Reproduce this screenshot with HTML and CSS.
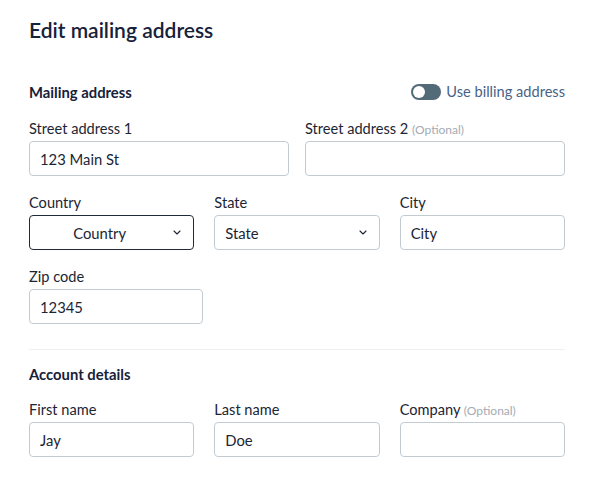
FILE: index.html
```html
<!DOCTYPE html>
<html lang="en">
<head>
<meta charset="utf-8">
<title>Edit mailing address</title>
<link rel="stylesheet" href="styles.css">
</head>
<body>
<main class="page">
  <h1 class="title">Edit mailing address</h1>

  <section class="section">
    <div class="section-head">
      <h2 class="section-title">Mailing address</h2>
      <label class="toggle">
        <span class="switch"><span class="knob"></span></span>
        <span class="toggle-text">Use billing address</span>
      </label>
    </div>

    <div class="row two">
      <div class="field">
        <label class="label">Street address 1</label>
        <div class="input">123 Main St</div>
      </div>
      <div class="field">
        <label class="label">Street address 2 <span class="opt">(Optional)</span></label>
        <div class="input"></div>
      </div>
    </div>

    <div class="row three">
      <div class="field">
        <label class="label">Country</label>
        <div class="input select focused">
          <span class="select-value center">Country</span>
          <svg class="chev" width="8" height="5" viewBox="0 0 8 5"><path d="M1 1l3 3 3-3" fill="none" stroke="#1b2535" stroke-width="1.1" stroke-linecap="round" stroke-linejoin="round"/></svg>
        </div>
      </div>
      <div class="field">
        <label class="label">State</label>
        <div class="input select">
          <span class="select-value">State</span>
          <svg class="chev" width="8" height="5" viewBox="0 0 8 5"><path d="M1 1l3 3 3-3" fill="none" stroke="#1b2535" stroke-width="1.1" stroke-linecap="round" stroke-linejoin="round"/></svg>
        </div>
      </div>
      <div class="field">
        <label class="label">City</label>
        <div class="input">City</div>
      </div>
    </div>

    <div class="row">
      <div class="field zip">
        <label class="label">Zip code</label>
        <div class="input">12345</div>
      </div>
    </div>
  </section>

  <hr class="divider">

  <section class="section account">
    <h2 class="section-title">Account details</h2>
    <div class="row three">
      <div class="field">
        <label class="label">First name</label>
        <div class="input">Jay</div>
      </div>
      <div class="field">
        <label class="label">Last name</label>
        <div class="input">Doe</div>
      </div>
      <div class="field">
        <label class="label">Company <span class="opt">(Optional)</span></label>
        <div class="input"></div>
      </div>
    </div>
  </section>
</main>
</body>
</html>
```

FILE: styles.css
```css
* { box-sizing: border-box; }
html, body { margin: 0; padding: 0; background: #ffffff; }
body {
  font-family: Lato, "Noto Sans", sans-serif;
  color: #1b2535;
}
.page {
  width: 536px;
  margin-left: 29px;
  padding-top: 16px;
}
.title {
  margin: 0;
  font-size: 21px;
  line-height: 28px;
  font-weight: 600;
  color: #16213a;
}
.section { margin-top: 38px; }
.section-head {
  display: flex;
  justify-content: space-between;
  align-items: center;
}
.section-title {
  margin: 0;
  font-size: 14.8px;
  line-height: 20px;
  font-weight: 700;
  color: #16213a;
}
.toggle {
  display: flex;
  align-items: center;
  gap: 5px;
}
.switch {
  width: 30px;
  height: 16px;
  border-radius: 8px;
  background: #536a78;
  display: flex;
  align-items: center;
  padding-left: 2px;
}
.knob {
  width: 12px;
  height: 12px;
  border-radius: 50%;
  background: #ffffff;
}
.toggle-text {
  font-size: 14.6px;
  line-height: 20px;
  color: #486386;
}
.row {
  display: grid;
  margin-top: 17px;
}
.row.two { grid-template-columns: 1fr 1fr; column-gap: 16px; }
.row.three { grid-template-columns: 1fr 1fr 1fr; column-gap: 20px; }
.field { display: flex; flex-direction: column; gap: 3px; }
.field.zip { width: 174px; }
.label {
  font-size: 14.6px;
  line-height: 18px;
  height: 19px;
  padding-top: 1px;
  color: #1b2535;
}
.opt {
  font-size: 12px;
  line-height: 12px;
  color: #a3abb4;
}
.input {
  height: 35px;
  border: 1px solid #c3cbd2;
  border-radius: 4px;
  padding: 0 10px;
  display: flex;
  align-items: center;
  font-size: 14.8px;
  color: #1b2535;
}
.select { justify-content: space-between; padding-right: 12px; }
.select.focused { border-color: #1f2b3a; }
.select-value.center { flex: 1; text-align: center; }
.chev { flex: none; margin-left: 14px; }
.divider {
  margin: 25px 0 0;
  border: 0;
  border-top: 1px solid #eef0f2;
}
.section.account { margin-top: 14px; }
.account .row { margin-top: 16px; }
```
